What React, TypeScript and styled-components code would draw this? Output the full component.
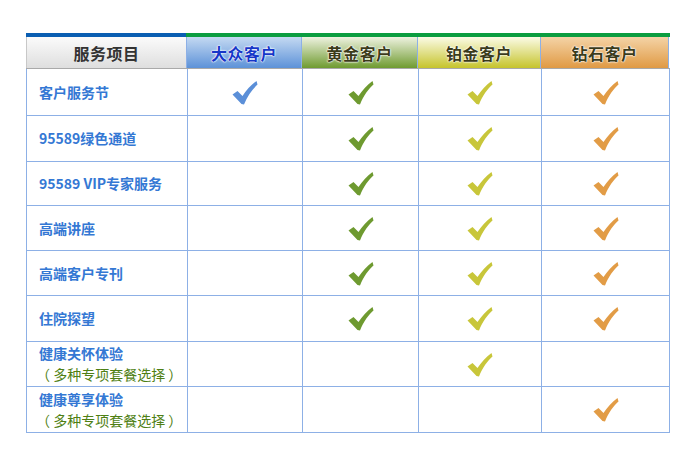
import styled, { createGlobalStyle } from "styled-components";

const GlobalStyle = createGlobalStyle`
  body {
    margin: 0;
    background: #fff;
    font-family: "Noto Sans CJK SC", "Liberation Sans", sans-serif;
  }
`;

const COLS = "161px 115px 116px 123px 128px";

type Tier = "blue" | "green" | "yellow" | "orange";

const tierColor: Record<Tier, string> = {
  blue: "#5b8fd8",
  green: "#6e9a30",
  yellow: "#c8c63a",
  orange: "#e29c46",
};

const headerBg: Record<string, string> = {
  base: "linear-gradient(#fbfbfb, #dedede)",
  blue: "linear-gradient(#c4d9f2, #5d92d8)",
  green: "linear-gradient(#eef2e0, #6f9b30)",
  yellow: "linear-gradient(#fbfbe6, #c6c42c)",
  orange: "linear-gradient(#f4d3a6, #e09a44)",
};

const Page = styled.div`
  padding: 33px 0 0 26px;
  width: 644px;
`;

const TopBar = styled.div`
  display: grid;
  grid-template-columns: 160px 1fr;
  height: 4px;
`;

const BarPart = styled.div<{ $color: string }>`
  background: ${(p) => p.$color};
`;

const Table = styled.div`
  border-left: 1px solid #8db0e6;
`;

const HeaderRow = styled.div`
  display: grid;
  grid-template-columns: ${COLS};
  height: 32px;
  border-bottom: 1px solid #a9a9a9;
  box-sizing: border-box;
  margin-left: -1px;
`;

const HeadCell = styled.div<{ $tone: string }>`
  display: flex;
  align-items: center;
  justify-content: center;
  background: ${(p) => headerBg[p.$tone]};
  border-right: 1px solid #8db0e6;
  border-left: ${(p) => (p.$tone === "base" ? "1px solid #c8c8c8" : "none")};
  font-size: 16px;
  font-weight: 600;
  letter-spacing: 0.5px;
  color: ${(p) => (p.$tone === "blue" ? "#1636c8" : p.$tone === "base" ? "#333" : "#3b3b1a")};
  text-shadow: ${(p) =>
    p.$tone === "base"
      ? "none"
      : "0 0 2px #fff, 0 0 2px #fff, 0 0 1px #fff"};
`;

const Row = styled.div<{ $h: number }>`
  display: grid;
  grid-template-columns: ${COLS};
  height: ${(p) => p.$h}px;
  box-sizing: border-box;
  border-bottom: 1px solid #8db0e6;
`;

const Cell = styled.div`
  display: flex;
  align-items: center;
  justify-content: center;
  border-right: 1px solid #8db0e6;
`;

const NameCell = styled.div`
  display: flex;
  flex-direction: column;
  justify-content: center;
  padding-left: 12px;
  border-right: 1px solid #8db0e6;
  line-height: 21px;
`;

const Name = styled.span`
  font-size: 14px;
  font-weight: 600;
  color: #3478d4;
`;

const Note = styled.span`
  font-size: 14px;
  color: #4f7f14;
  margin-left: -3px;
  white-space: pre;
`;

function Check({ tier }: { tier: Tier }) {
  return (
    <svg width="28" height="26" viewBox="0 0 28 26" style={{ marginTop: 1 }}>
      <path
        d="M1.5 14.5 L6.5 11 L11.5 16 C15 10.5 20 5 25.5 1 L26.5 4.5 C21.5 9 16.5 15.5 13 24.5 L10.5 24 Z"
        fill={tierColor[tier]}
      />
    </svg>
  );
}

const tiers: Tier[] = ["blue", "green", "yellow", "orange"];

const rows: { name: string; note?: string; has: Tier[]; h: number }[] = [
  { name: "客户服务节", has: ["blue", "green", "yellow", "orange"], h: 47 },
  { name: "95589绿色通道", has: ["green", "yellow", "orange"], h: 46 },
  { name: "95589 VIP专家服务", has: ["green", "yellow", "orange"], h: 44 },
  { name: "高端讲座", has: ["green", "yellow", "orange"], h: 45 },
  { name: "高端客户专刊", has: ["green", "yellow", "orange"], h: 45 },
  { name: "住院探望", has: ["green", "yellow", "orange"], h: 46 },
  { name: "健康关怀体验", note: "（ 多种专项套餐选择 ）", has: ["yellow"], h: 45 },
  { name: "健康尊享体验", note: "（ 多种专项套餐选择 ）", has: ["orange"], h: 46 },
];

export default function App() {
  return (
    <Page>
      <GlobalStyle />
      <TopBar>
        <BarPart $color="#0a5eb2" />
        <BarPart $color="#0b9d40" />
      </TopBar>
      <Table>
        <HeaderRow>
          <HeadCell $tone="base">服务项目</HeadCell>
          <HeadCell $tone="blue">大众客户</HeadCell>
          <HeadCell $tone="green">黄金客户</HeadCell>
          <HeadCell $tone="yellow">铂金客户</HeadCell>
          <HeadCell $tone="orange">钻石客户</HeadCell>
        </HeaderRow>
        {rows.map((r) => (
          <Row key={r.name} $h={r.h}>
            <NameCell>
              <Name>{r.name}</Name>
              {r.note && <Note>{r.note}</Note>}
            </NameCell>
            {tiers.map((t) => (
              <Cell key={t}>{r.has.includes(t) && <Check tier={t} />}</Cell>
            ))}
          </Row>
        ))}
      </Table>
    </Page>
  );
}
